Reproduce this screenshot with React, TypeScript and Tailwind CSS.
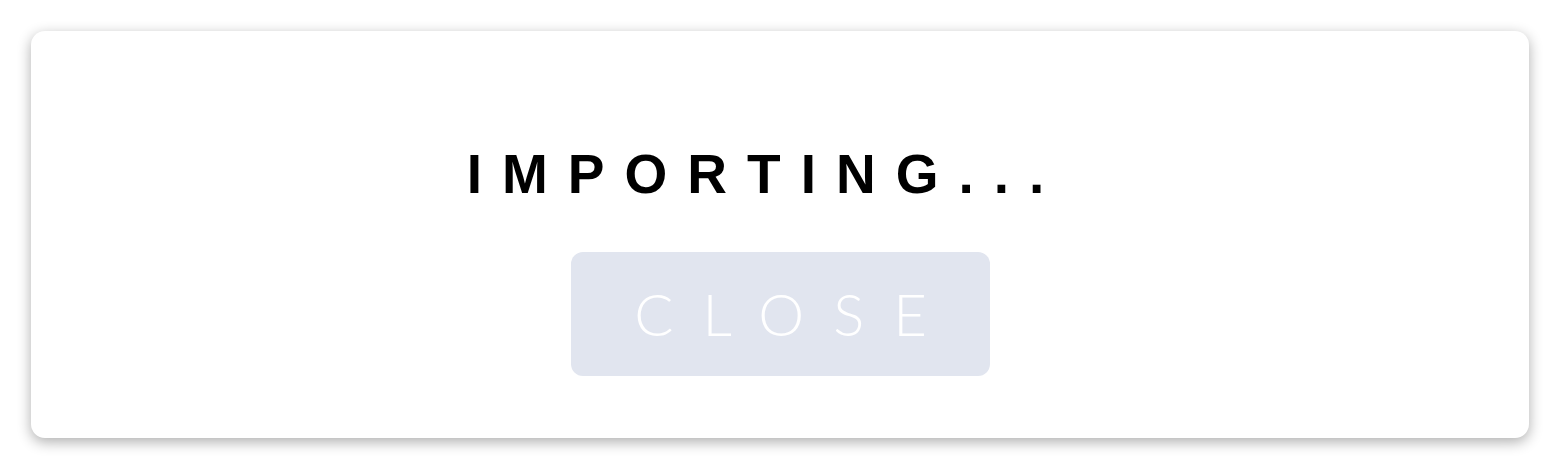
export default function App() {
  return (
    <div className="min-h-screen bg-white p-[31px]">
      <section className="flex h-[407px] w-[1498px] flex-col items-center rounded-[14px] bg-white pt-[116px] pb-[61px] shadow-[0_4px_14px_rgba(0,0,0,0.32)]">
        <h2 className="pr-[29px] font-['Liberation_Sans',Arial,sans-serif] text-[55px] leading-none font-bold tracking-[20px] text-black">
          IMPORTING...
        </h2>
        <button
          type="button"
          className="mt-[50px] flex h-[124px] w-[419px] items-center justify-center rounded-[12px] bg-[#e1e5ef] pl-[30px] font-['Lato','Open_Sans',sans-serif] text-[58px] leading-none font-light tracking-[29px] text-white"
        >
          CLOSE
        </button>
      </section>
    </div>
  );
}
